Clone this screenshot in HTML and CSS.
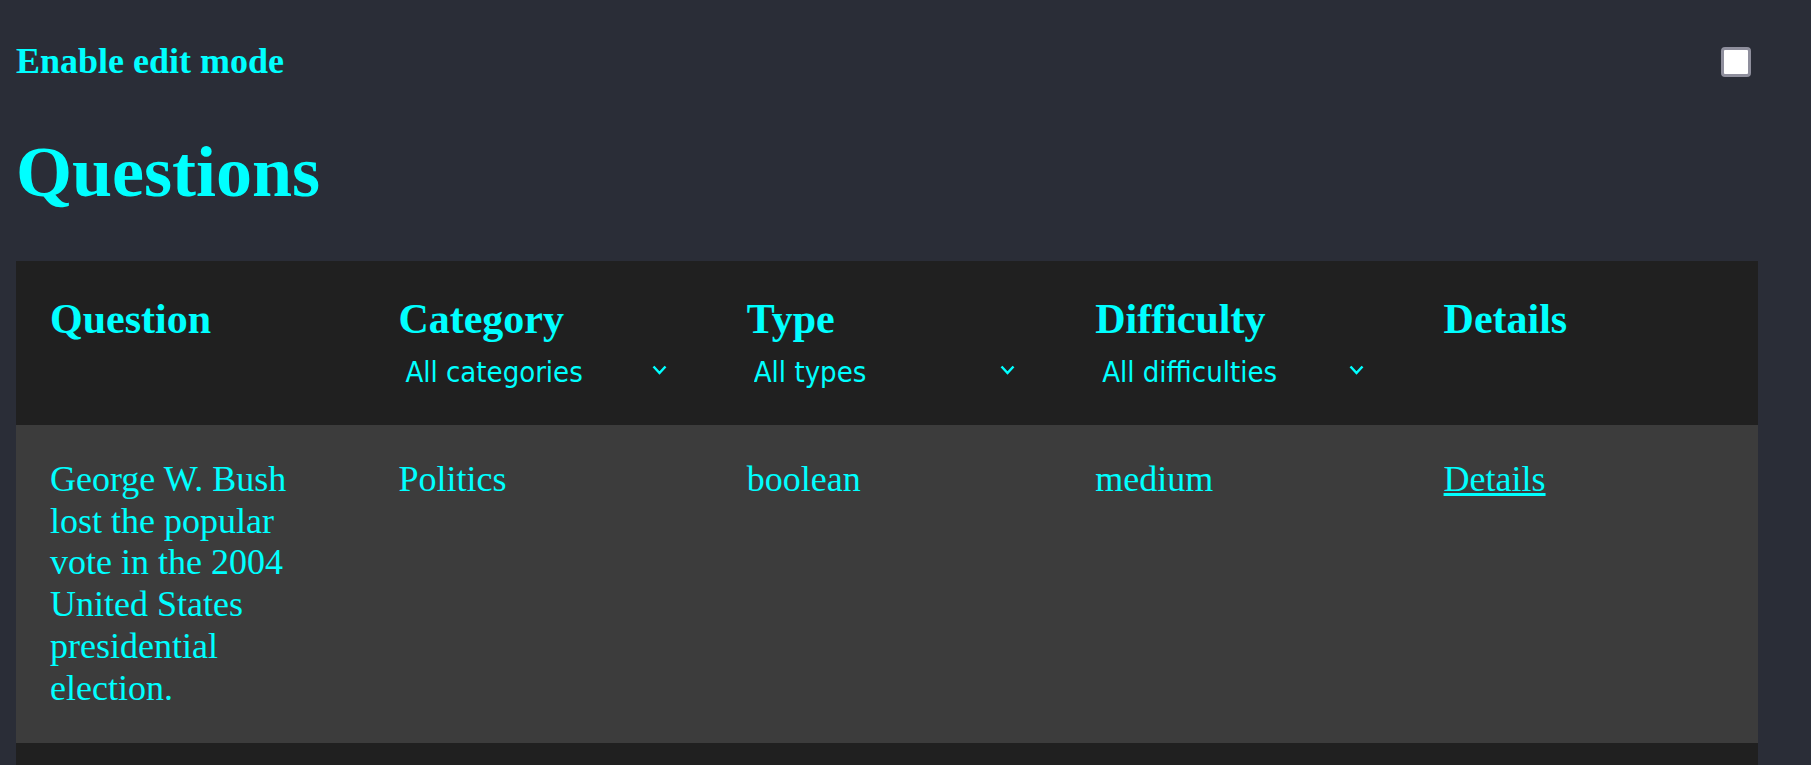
FILE: index.html
```html
<!DOCTYPE html>
<html lang="en">
<head>
<meta charset="utf-8">
<title>Questions</title>
<link rel="stylesheet" href="styles.css">
</head>
<body>
<div class="page">
  <div class="edit-bar">
    <label for="edit-mode" class="edit-label">Enable edit mode</label>
    <input type="checkbox" id="edit-mode" class="edit-check">
  </div>
  <h1 class="title">Questions</h1>
  <table class="questions">
    <thead>
      <tr>
        <th><div class="th-title">Question</div></th>
        <th>
          <div class="th-title">Category</div>
          <div class="filter">
            <select class="filter-select"><option>All categories</option><option>Politics</option></select>
            <svg class="chevron" viewBox="0 0 15 10" width="15" height="10"><polyline points="1.5,1.5 7.5,8 13.5,1.5" fill="none" stroke="#00ffff" stroke-width="2.5"/></svg>
          </div>
        </th>
        <th>
          <div class="th-title">Type</div>
          <div class="filter">
            <select class="filter-select"><option>All types</option><option>boolean</option><option>multiple</option></select>
            <svg class="chevron" viewBox="0 0 15 10" width="15" height="10"><polyline points="1.5,1.5 7.5,8 13.5,1.5" fill="none" stroke="#00ffff" stroke-width="2.5"/></svg>
          </div>
        </th>
        <th>
          <div class="th-title">Difficulty</div>
          <div class="filter">
            <select class="filter-select"><option>All difficulties</option><option>easy</option><option>medium</option><option>hard</option></select>
            <svg class="chevron" viewBox="0 0 15 10" width="15" height="10"><polyline points="1.5,1.5 7.5,8 13.5,1.5" fill="none" stroke="#00ffff" stroke-width="2.5"/></svg>
          </div>
        </th>
        <th><div class="th-title">Details</div></th>
      </tr>
    </thead>
    <tbody>
      <tr>
        <td>George W. Bush lost the popular vote in the 2004 United States presidential election.</td>
        <td>Politics</td>
        <td>boolean</td>
        <td>medium</td>
        <td><a href="#" class="details-link">Details</a></td>
      </tr>
      <tr>
        <td>What is the capital of Australia?</td>
        <td>Geography</td>
        <td>multiple</td>
        <td>easy</td>
        <td><a href="#" class="details-link">Details</a></td>
      </tr>
    </tbody>
  </table>
</div>
</body>
</html>
```
FILE: styles.css
```css
html, body {
  margin: 0;
  padding: 0;
  background: #2a2d37;
}

body {
  color: #00ffff;
  font-family: "Liberation Serif", "Times New Roman", serif;
}

.page {
  padding: 40px 53px 0 16px;
}

.edit-bar {
  display: flex;
  align-items: center;
  justify-content: space-between;
}

.edit-label {
  font-size: 36px;
  font-weight: bold;
  line-height: normal;
}

.edit-check {
  appearance: none;
  -webkit-appearance: none;
  width: 30px;
  height: 30px;
  margin: 1px 7px 0 0;
  box-sizing: border-box;
  border: 3.5px solid #8f8f9d;
  border-radius: 4px;
  background: #ffffff;
}

.title {
  font-size: 72px;
  font-weight: bold;
  margin: 49px 0 47px;
  line-height: normal;
}

.questions {
  width: 100%;
  border-collapse: collapse;
  table-layout: fixed;
}

.questions th,
.questions td {
  padding: 34px;
  text-align: left;
  vertical-align: top;
}

.questions thead tr {
  background: #202020;
}

.questions th {
  font-size: 42px;
  font-weight: bold;
}

.questions td {
  font-size: 36px;
  font-weight: normal;
  line-height: 41.7px;
}

.questions tbody tr:nth-child(odd) {
  background: #3c3c3c;
}

.questions tbody tr:nth-child(even) {
  background: #202020;
}

.th-title {
  line-height: normal;
}

.filter {
  position: relative;
}

.filter-select {
  appearance: none;
  -webkit-appearance: none;
  display: block;
  width: 100%;
  height: 48px;
  margin: 0;
  padding: 9px 7px 0;
  border: none;
  background: transparent;
  color: #00ffff;
  font-family: "DejaVu Sans Condensed", "Liberation Sans", sans-serif;
  font-size: 29px;
  font-weight: normal;
}

.chevron {
  position: absolute;
  right: 12px;
  top: 22px;
  pointer-events: none;
}

.details-link {
  color: #00ffff;
  text-decoration: underline;
}
```
